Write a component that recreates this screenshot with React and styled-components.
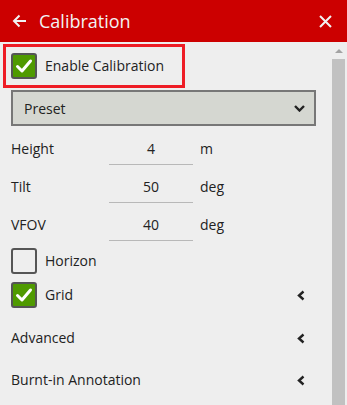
import styled, { createGlobalStyle } from 'styled-components';

const GlobalStyle = createGlobalStyle`
  html, body {
    margin: 0;
    padding: 0;
    background: #eeeeee;
  }
  body {
    font-family: "Open Sans", "Liberation Sans", sans-serif;
  }
`;

function Check({ on }) {
  return (
    <Box on={on}>
      {on && (
        <svg width="18" height="16" viewBox="0 0 18 16">
          <polyline points="2.5,8.5 7,13 15.5,3" fill="none" stroke="#fff" strokeWidth="3" strokeLinecap="round" strokeLinejoin="round" />
        </svg>
      )}
    </Box>
  );
}

function ChevronLeft() {
  return (
    <svg width="8" height="11" viewBox="0 0 8 11">
      <polyline points="6.5,1.5 2,5.5 6.5,9.5" fill="none" stroke="#222" strokeWidth="2.4" />
    </svg>
  );
}

function Field({ label, value, unit, first }) {
  return (
    <FieldRow first={first}>
      <Label>{label}</Label>
      <Input>{value}</Input>
      <Unit>{unit}</Unit>
    </FieldRow>
  );
}

export default function App() {
  return (
    <>
      <GlobalStyle />
      <Panel>
        <Header>
          <svg width="15" height="14" viewBox="0 0 15 14">
            <path d="M14 7H2M7.5 1.5L2 7l5.5 5.5" fill="none" stroke="#f2f2f2" strokeWidth="2" />
          </svg>
          <Title>Calibration</Title>
          <svg width="13" height="13" viewBox="0 0 13 13">
            <path d="M1 1l11 11M12 1L1 12" fill="none" stroke="#f2f2f2" strokeWidth="2" />
          </svg>
        </Header>
        <Body>
          <Content>
            <Highlight>
              <Check on />
              <Text>Enable Calibration</Text>
            </Highlight>
            <Select>
              <span>Preset</span>
              <svg width="11" height="7" viewBox="0 0 11 7">
                <polyline points="1,1 5.5,5.5 10,1" fill="none" stroke="#222" strokeWidth="2.4" />
              </svg>
            </Select>
            <Field first label="Height" value="4" unit="m" />
            <Field label="Tilt" value="50" unit="deg" />
            <Field label="VFOV" value="40" unit="deg" />
            <CheckRow>
              <Check />
              <Text>Horizon</Text>
            </CheckRow>
            <CheckRow>
              <Check on />
              <Text>Grid</Text>
              <Spacer />
              <ChevronLeft />
            </CheckRow>
            <Section first>
              <Text>Advanced</Text>
              <Spacer />
              <ChevronLeft />
            </Section>
            <Section>
              <Text>Burnt-in Annotation</Text>
              <Spacer />
              <ChevronLeft />
            </Section>
          </Content>
          <Scrollbar>
            <UpArrow />
            <Thumb />
          </Scrollbar>
        </Body>
      </Panel>
    </>
  );
}

const Panel = styled.div`
  width: 347px;
  height: 405px;
  display: flex;
  flex-direction: column;
  overflow: hidden;
  background: #eeeeee;
`;

const Header = styled.div`
  height: 42px;
  flex-shrink: 0;
  background: #cc0000;
  display: flex;
  align-items: center;
  padding: 0 15px 0 12px;
  svg:last-child {
    margin-left: auto;
  }
`;

const Title = styled.div`
  margin-left: 12px;
  color: #f2f2f2;
  font-size: 18px;
  line-height: 24px;
`;

const Body = styled.div`
  flex: 1;
  display: flex;
  min-height: 0;
`;

const Content = styled.div`
  flex: 1;
  padding-left: 11px;
  display: flex;
  flex-direction: column;
`;

const Highlight = styled.div`
  box-sizing: border-box;
  margin: 2px 0 0 -8px;
  width: 182px;
  height: 44px;
  border: 3px solid #ee1c25;
  padding-left: 5px;
  display: flex;
  align-items: center;
  gap: 8px;
`;

const Box = styled.div`
  box-sizing: border-box;
  width: 26px;
  height: 26px;
  border: 2px solid #555;
  border-radius: 3px;
  background: ${p => (p.on ? '#4f9a00' : 'transparent')};
  display: flex;
  align-items: center;
  justify-content: center;
  flex-shrink: 0;
`;

const Text = styled.div`
  font-size: 14px;
  line-height: 20px;
  color: #222;
`;

const Select = styled.div`
  box-sizing: border-box;
  margin-top: 2px;
  width: 305px;
  height: 36px;
  background: #d5d7d1;
  border: 2px solid #777;
  padding: 0 9px 0 11px;
  display: flex;
  align-items: center;
  justify-content: space-between;
  font-size: 14px;
  color: #222;
`;

const FieldRow = styled.div`
  height: 38px;
  display: flex;
  align-items: flex-start;
  margin-top: ${p => (p.first ? '4px' : '0')};
  font-size: 14px;
  line-height: 20px;
  color: #222;
`;

const Label = styled.div`
  width: 98px;
  padding-top: 9px;
`;

const Input = styled.div`
  box-sizing: border-box;
  width: 84px;
  height: 35px;
  padding-top: 9px;
  text-align: center;
  border-bottom: 1px solid #b8b8b8;
`;

const Unit = styled.div`
  padding: 9px 0 0 7px;
`;

const CheckRow = styled.div`
  height: 34px;
  display: flex;
  align-items: center;
  gap: 8px;
  padding-right: 27px;
`;

const Section = styled.div`
  height: 42px;
  margin-top: ${p => (p.first ? '5px' : '0')};
  display: flex;
  align-items: center;
  padding-right: 27px;
  flex-shrink: 0;
`;

const Spacer = styled.div`
  flex: 1;
`;

const Scrollbar = styled.div`
  width: 15px;
  flex-shrink: 0;
  display: flex;
  flex-direction: column;
  align-items: flex-start;
  background: #eeeeee;
`;

const UpArrow = styled.div`
  width: 0;
  height: 0;
  margin: 7px 0 0 3px;
  border-left: 4px solid transparent;
  border-right: 4px solid transparent;
  border-bottom: 4px solid #a3a3a3;
`;

const Thumb = styled.div`
  margin-top: 6px;
  width: 13px;
  flex: 1;
  background: #c1c1c1;
`;
